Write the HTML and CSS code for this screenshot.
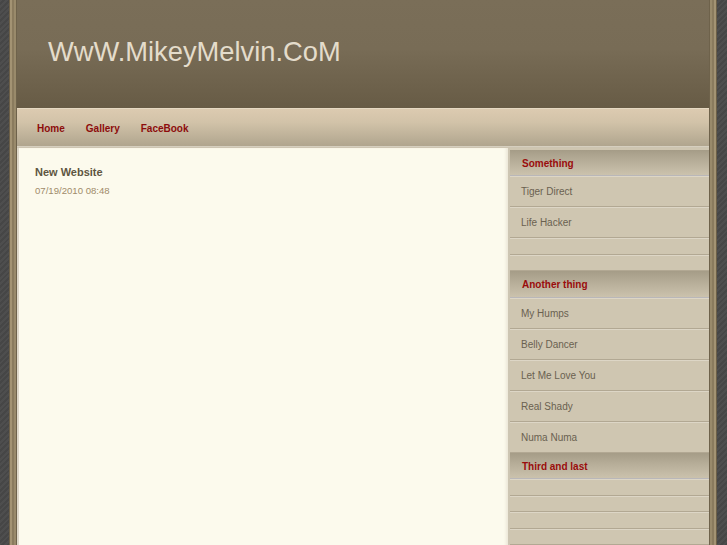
FILE: index.html
```html
<!DOCTYPE html>
<html>
<head>
<meta charset="utf-8">
<title>WwW.MikeyMelvin.CoM</title>
<link rel="stylesheet" href="styles.css">
</head>
<body>
<div class="frame">
  <div class="page">
    <header class="masthead">
      <h1 class="site-title">WwW.MikeyMelvin.CoM</h1>
    </header>
    <nav class="topnav">
      <a href="#">Home</a>
      <a href="#">Gallery</a>
      <a href="#">FaceBook</a>
    </nav>
    <div class="content">
      <main class="main">
        <h2 class="post-title">New Website</h2>
        <div class="post-date">07/19/2010 08:48</div>
      </main>
      <aside class="sidebar">
        <div class="side-head">Something</div>
        <a class="side-item" href="#">Tiger Direct</a>
        <a class="side-item" href="#">Life Hacker</a>
        <div class="side-empty"></div>
        <div class="side-empty"></div>
        <div class="side-head">Another thing</div>
        <a class="side-item" href="#">My Humps</a>
        <a class="side-item" href="#">Belly Dancer</a>
        <a class="side-item" href="#">Let Me Love You</a>
        <a class="side-item" href="#">Real Shady</a>
        <a class="side-item" href="#">Numa Numa</a>
        <div class="side-head">Third and last</div>
        <div class="side-empty"></div>
        <div class="side-empty"></div>
        <div class="side-empty"></div>
        <div class="side-empty"></div>
      </aside>
    </div>
  </div>
</div>
</body>
</html>
```
FILE: styles.css
```css
html, body {
  margin: 0;
  padding: 0;
  height: 100%;
}
body {
  background-color: #4a4a4a;
  background-image: repeating-linear-gradient(135deg, #4e4e4e 0 2px, #464646 2px 4px);
  font-family: "Liberation Sans", Arial, sans-serif;
  overflow: hidden;
}
.frame {
  margin-left: 9px;
  width: 708px;
  min-height: 100%;
  background: linear-gradient(to right,
    #6c5f47 0, #6c5f47 1px,
    #a39373 1px, #a39373 3px,
    #8a7b5e 3px, #8a7b5e 5px,
    #998a6b 5px, #998a6b 7px,
    #6e624b 7px, #6e624b 8px,
    transparent 8px, transparent 700px,
    #6e624b 700px, #6e624b 701px,
    #998a6b 701px, #998a6b 703px,
    #8a7b5e 703px, #8a7b5e 705px,
    #a39373 705px, #a39373 707px,
    #6c5f47 707px, #6c5f47 708px);
}
.page {
  margin: 0 8px;
  min-height: 545px;
  background: #c6bda8;
}
.masthead {
  height: 108px;
  background: linear-gradient(to bottom, #7a6e58 0%, #786c56 45%, #675b45 100%);
  padding-left: 31px;
  box-sizing: border-box;
  padding-top: 1px;
}
.site-title {
  margin: 34px 0 0;
  font-family: "Liberation Sans", Arial, sans-serif;
  font-weight: normal;
  font-size: 27.3px;
  line-height: 34px;
  color: #e4dccb;
}
.topnav {
  height: 39px;
  box-sizing: border-box;
  border-top: 1px solid #e6d9c2;
  border-bottom: 1px solid #d6cfbf;
  background: linear-gradient(to bottom, #dccab0 0%, #d2c3a9 35%, #b0a58e 100%);
  display: flex;
  align-items: center;
  gap: 21px;
  padding-left: 20px;
  padding-top: 2px;
}
.topnav a {
  color: #8d0c0c;
  font-weight: bold;
  font-size: 10px;
  text-decoration: none;
  line-height: 12px;
}
.content {
  display: flex;
  gap: 2px;
  background: #cdc5b2;
  padding-top: 1px;
}
.main {
  min-height: 400px;
  border-left: 2px solid #ddd7c8;
  background: #fcfaed;
  box-shadow: inset -3px 0 3px -1px #ece7d8;
  padding: 17px 0 0 16px;
  width: 473px;
}
.post-title {
  margin: 0;
  font-size: 11px;
  font-weight: bold;
  color: #5e5541;
  line-height: 14px;
}
.post-date {
  margin-top: 6px;
  font-size: 9.6px;
  color: #a08b6a;
  line-height: 12px;
}
.sidebar {
  width: 199px;
  background: #cfc6b1;
  padding-top: 1.5px;
  display: flex;
  flex-direction: column;
}
.side-head {
  border-bottom: 1px solid #b9b7b9;
  background: linear-gradient(to bottom, #a59c87 0%, #b5ac97 40%, #cbc2ad 100%);
  color: #9a0c0c;
  font-weight: bold;
  font-size: 10px;
  line-height: 12px;
  padding: 8px 0 0 12px;
  box-sizing: border-box;
  height: 26.5px;
}
.side-item {
  display: block;
  height: 31px;
  box-sizing: border-box;
  border-top: 1px solid #ddd6c6;
  border-bottom: 1px solid #b2a893;
  color: #6a6150;
  font-size: 10px;
  line-height: 12px;
  text-decoration: none;
  padding: 9px 0 0 11px;
}
.side-empty {
  height: 16.5px;
  box-sizing: border-box;
  border-top: 1px solid #ddd6c6;
  border-bottom: 1px solid #b2a893;
}
```
